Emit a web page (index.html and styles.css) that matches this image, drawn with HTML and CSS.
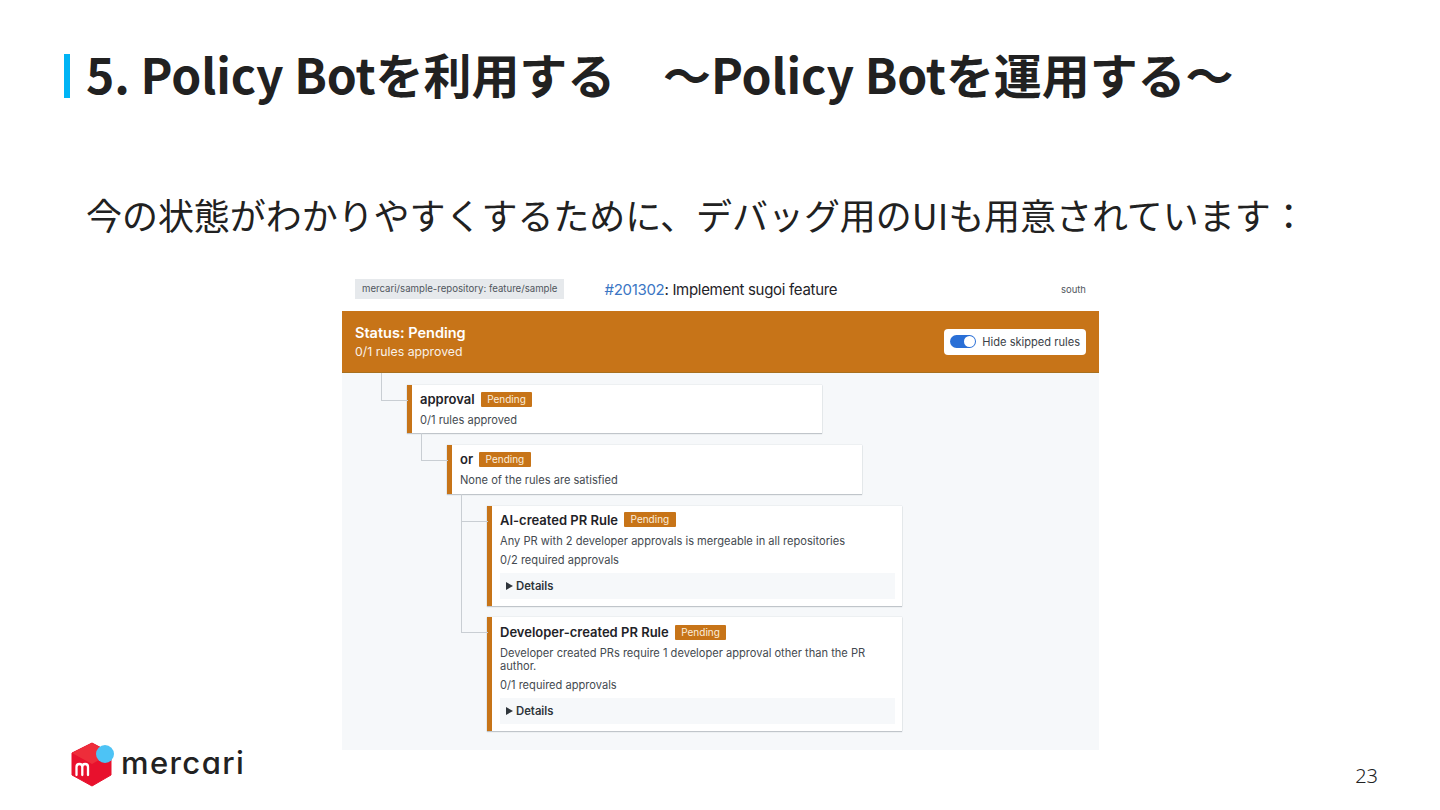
FILE: index.html
```html
<!DOCTYPE html>
<html lang="ja">
<head>
<meta charset="utf-8">
<title>Policy Bot</title>
<link rel="stylesheet" href="styles.css">
</head>
<body>
<main class="slide">
  <h1 class="title">5. Policy Botを利用する　〜Policy Botを運用する〜</h1>
  <p class="lead">今の状態がわかりやすくするために、デバッグ用のUIも用意されています：</p>
  <section class="panel">
    <header class="topbar">
      <span class="branch">mercari/sample-repository: feature/sample</span>
      <span class="pr"><span class="pr-num">#201302</span>: Implement sugoi feature</span>
      <span class="region">south</span>
    </header>
    <div class="status">
      <div>
        <div class="status-title">Status: Pending</div>
        <div class="status-sub">0/1 rules approved</div>
      </div>
      <div class="toggle-box">
        <span class="switch"><span class="knob"></span></span>
        <span>Hide skipped rules</span>
      </div>
    </div>
    <div class="tree">
      <div class="level">
        <article class="card">
          <div class="card-head"><strong>approval</strong><span class="badge">Pending</span></div>
          <p class="desc">0/1 rules approved</p>
        </article>
        <div class="level">
          <article class="card">
            <div class="card-head"><strong>or</strong><span class="badge">Pending</span></div>
            <p class="desc">None of the rules are satisfied</p>
          </article>
          <div class="level">
            <article class="card card-rule">
              <div class="card-head"><strong>AI-created PR Rule</strong><span class="badge">Pending</span></div>
              <p class="desc">Any PR with 2 developer approvals is mergeable in all repositories</p>
              <p class="desc">0/2 required approvals</p>
              <div class="details"><span class="tri"></span>Details</div>
            </article>
            <article class="card card-rule card-last">
              <div class="card-head"><strong>Developer-created PR Rule</strong><span class="badge">Pending</span></div>
              <p class="desc">Developer created PRs require 1 developer approval other than the PR author.</p>
              <p class="desc">0/1 required approvals</p>
              <div class="details"><span class="tri"></span>Details</div>
            </article>
          </div>
        </div>
      </div>
    </div>
  </section>
  <footer class="footer">
    <div class="logo">
      <svg class="logo-mark" width="44" height="46" viewBox="0 0 44 46" aria-hidden="true">
        <path d="M21 1 L40 11 L40 33 L21 44 L1 33 L1 11 Z" fill="#e8112d" stroke="#e8112d" stroke-width="1" stroke-linejoin="round"/>
        <path d="M21 1 L1 11 L21 22 L40 11 Z" fill="#ee2d3a"/>
        <circle cx="34" cy="12" r="9" fill="#4dc3f5"/>
        <path d="M5.5 33 V25 Q5.5 22 8.5 22 Q11.3 22 11.3 25 V33 M11.3 25 Q11.3 22 14.1 22 Q17 22 17 25 V33" fill="none" stroke="#fff" stroke-width="2.3" stroke-linecap="round"/>
      </svg>
      <span class="wordmark">mercari</span>
    </div>
    <span class="page">23</span>
  </footer>
</main>
</body>
</html>
```
FILE: styles.css
```css
* { box-sizing: border-box; }
html, body { margin: 0; padding: 0; background: #fff; }
.slide {
  width: 1440px;
  height: 810px;
  overflow: hidden;
  display: flex;
  flex-direction: column;
  background: #fff;
  color: #212121;
  font-family: "Noto Sans CJK JP", "Noto Sans", sans-serif;
}
.title {
  margin: 54px 0 0 64px;
  height: 44px;
  padding-left: 16px;
  border-left: 6px solid #00b4f5;
  font-size: 48px;
  line-height: 38px;
  font-weight: 700;
  letter-spacing: -0.1px;
  white-space: nowrap;
}
.lead {
  margin: 92px 0 0 86px;
  font-size: 36px;
  line-height: 48px;
  height: 48px;
  font-weight: 400;
  white-space: nowrap;
  letter-spacing: -0.05px;
}
.panel {
  width: 757px;
  height: 480px;
  margin: 32px 0 0 342px;
  display: flex;
  flex-direction: column;
  background: #f6f8fa;
  color: #24292f;
  font-family: Inter, "Liberation Sans", sans-serif;
  font-size: 11px;
}
.topbar {
  height: 41px;
  display: flex;
  align-items: center;
  padding: 0 13px;
  background: #fff;
}
.branch {
  background: #e6e9ec;
  color: #50565d;
  font-size: 9.65px;
  height: 20px;
  line-height: 20px;
  padding: 0 7px;
  margin-top: -3px;
}
.pr {
  font-size: 15px;
  letter-spacing: -0.3px;
  margin-top: -3px;
  margin-left: 40px;
  color: #1f2328;
}
.pr-num { color: #3b76c4; }
.region { font-size: 9.5px; color: #50565d; margin: -3px 0 0 auto; }
.status {
  height: 62px;
  background: #c77418;
  border-bottom: 1px solid #a8701f;
  color: #fff;
  padding: 0 13px;
  display: flex;
  align-items: center;
  justify-content: space-between;
}
.status-title { font-size: 14.5px; font-weight: 600; line-height: 20px; }
.status-sub { font-size: 12.3px; line-height: 18px; opacity: .9; }
.toggle-box {
  display: flex;
  align-items: center;
  gap: 6px;
  height: 26px;
  padding: 0 6px;
  background: #fff;
  border-radius: 4px;
  color: #3c4248;
  font-size: 11.1px;
}
.switch {
  width: 26px;
  height: 13px;
  border-radius: 7px;
  background: #2a6fd6;
  display: flex;
  justify-content: flex-end;
  align-items: center;
  padding-right: 1px;
}
.knob { width: 11px; height: 11px; border-radius: 50%; background: #fff; }
.tree { padding: 12px 0 0 25px; }
.level { padding-left: 40px; }
.card {
  position: relative;
  width: 415px;
  margin-bottom: 12px;
  padding: 4px 7px 6px 8px;
  background: #fff;
  border-left: 5px solid #c77418;
  box-shadow: 0 1px 1px rgba(90, 100, 110, .3), 0 0 1px rgba(90, 100, 110, .3);
}
.card-rule { padding-bottom: 7px; margin-bottom: 11px; }
.card-last { padding-top: 5px; }
.card::before {
  content: "";
  position: absolute;
  left: -31px;
  top: -12px;
  width: 26px;
  height: 27px;
  border-left: 1px solid #c9ced3;
  border-bottom: 1px solid #c9ced3;
}
.card-last::before { top: -100px; height: 115px; }
.card-head {
  display: flex;
  align-items: center;
  gap: 6px;
  height: 20px;
}
.card-head strong { font-size: 13px; font-weight: 600; color: #1f2328; }
.badge {
  background: #c77418;
  color: #fbeedd;
  font-size: 10px;
  height: 15px;
  line-height: 15px;
  padding: 0 6.5px;
  border-radius: 1px;
}
.desc {
  margin: 5px 0 0;
  font-size: 11.1px;
  line-height: 13.3px;
  color: #444a50;
}
.desc + .desc { margin-top: 6px; }
.card-last .desc + .desc { margin-top: 5px; }
.details {
  display: flex;
  align-items: center;
  height: 26px;
  margin-top: 6px;
  padding-left: 6px;
  background: #f6f8fa;
  font-size: 11.3px;
  font-weight: 600;
  color: #2f353b;
}
.tri {
  width: 0;
  height: 0;
  border-left: 7px solid #2f353b;
  border-top: 4px solid transparent;
  border-bottom: 4px solid transparent;
  margin-right: 3px;
}
.footer {
  margin: -8px 62px 0 71px;
  display: flex;
  justify-content: space-between;
  align-items: flex-start;
}
.logo { display: flex; align-items: center; gap: 6px; }
.logo-mark { display: block; }
.wordmark {
  font-family: Inter, Lato, sans-serif;
  font-feature-settings: "cv11";
  font-size: 31px;
  line-height: 44px;
  font-weight: 500;
  color: #222;
  letter-spacing: 1.4px;
  margin-top: -4px;
}
.page {
  font-family: "Noto Sans", sans-serif;
  font-size: 20px;
  font-weight: 300;
  color: #222;
  margin-top: 20px;
}
```
